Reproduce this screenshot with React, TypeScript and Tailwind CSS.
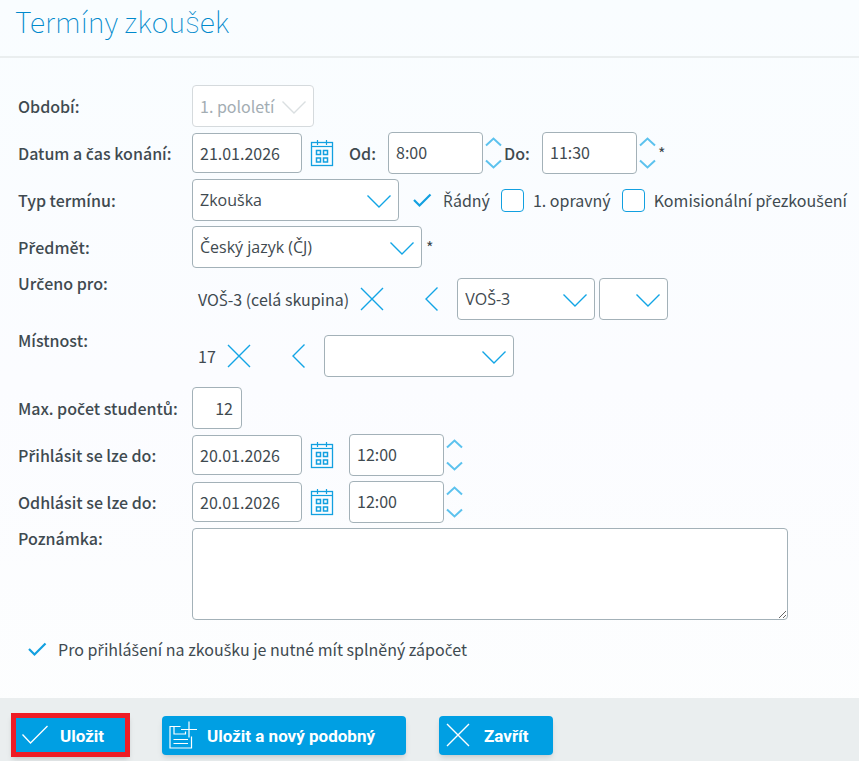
import { useState } from "react";
import type { ReactNode } from "react";

const BOX = "h-[42px] rounded border border-[#a3b1b8] bg-white text-base text-[#3f4a50]";

// Noto CJK has no precomposed č, ř, š, ů, so these come from another family
function Cz({ text, font = "font-['Open_Sans',sans-serif]" }: { text: string; font?: string }) {
    return (
        <span>
            {text.split(/([čřšůČŘŠŮ])/).map((part, i) =>
                i % 2 ? (
                    <span key={i} className={font}>{part}</span>
                ) : (
                    part
                )
            )}
        </span>
    );
}

function Row({ label, htmlFor, top, children }: { label: string; htmlFor?: string; top?: boolean; children: ReactNode }) {
    return (
        <div className={`flex ${top ? "items-start" : "items-center"}`}>
            <label htmlFor={htmlFor} className="w-[174px] shrink-0 font-medium leading-5 whitespace-nowrap">
                <Cz text={label} font="font-['Open_Sans',sans-serif] font-semibold" />
            </label>
            {children}
        </div>
    );
}

function Select({ id, label, width, options, disabled }: {
    id: string;
    label?: string;
    width: string;
    options: string[];
    disabled?: boolean;
}) {
    return (
        <div className={`relative shrink-0 ${width}`}>
            <select
                id={id}
                aria-label={label}
                disabled={disabled}
                className={`${BOX} block w-full appearance-none pl-[7px] font-['Open_Sans',sans-serif] disabled:border-[#d5dadd] disabled:font-['Noto_Sans_CJK_SC',sans-serif] disabled:text-[#a3adb3] disabled:opacity-100`}
            >
                {options.map((o) => (
                    <option key={o}>{o}</option>
                ))}
            </select>
            <svg
                viewBox="0 0 24 13"
                className={`pointer-events-none absolute top-4 right-2 h-[13px] w-6 ${disabled ? "text-[#dadfe1]" : "text-[#12a5e5]"}`}
                fill="none"
                stroke="currentColor"
                strokeWidth="1.4"
            >
                <path d="M0.5 0.5L12 12L23.5 0.5" />
            </svg>
        </div>
    );
}

function DateField({ id, value }: { id: string; value: string }) {
    return (
        <>
            <input id={id} type="text" defaultValue={value} className="h-10 w-[110px] rounded border border-[#a3b1b8] bg-white px-[7px] text-base" />
            <button type="button" aria-label="Kalendář" className="ml-2 mr-[15px] shrink-0 text-[#12a0e0]">
                <svg viewBox="0 0 24 27" className="h-[27px] w-6" fill="none" stroke="currentColor">
                    <rect x="1.5" y="2.5" width="21" height="23" strokeWidth="1.3" />
                    <path d="M1 6.5H23" strokeWidth="1.2" />
                    <path d="M7.5 0V5M16.5 0V5" strokeWidth="1.2" />
                    <g strokeWidth="1.5">
                        <rect x="6.5" y="10.5" width="4" height="4" />
                        <rect x="13.5" y="10.5" width="4" height="4" />
                        <rect x="6.5" y="18" width="4" height="4" />
                        <rect x="13.5" y="18" width="4" height="4" />
                    </g>
                </svg>
            </button>
        </>
    );
}

function TimeField({ id, label, value }: { id: string; label?: string; value: string }) {
    return (
        <>
            <input id={id} aria-label={label} type="text" defaultValue={value} className={`${BOX} w-[95px] px-[7px] pb-0.5`} />
            <div className="flex w-[21px] shrink-0 flex-col items-center gap-3 text-[#5cc2ee]">
                <button type="button" aria-label="Více" className="block">
                    <svg viewBox="0 0 17 10" className="h-2.5 w-[17px]" fill="none" stroke="currentColor" strokeWidth="2">
                        <path d="M1 8.5L8.5 1.5L16 8.5" />
                    </svg>
                </button>
                <button type="button" aria-label="Méně" className="block">
                    <svg viewBox="0 0 17 10" className="h-2.5 w-[17px]" fill="none" stroke="currentColor" strokeWidth="2">
                        <path d="M1 1.5L8.5 8.5L16 1.5" />
                    </svg>
                </button>
            </div>
        </>
    );
}

function Checkbox({ id, label, checked }: { id: string; label: string; checked?: boolean }) {
    const [on, setOn] = useState(!!checked);
    return (
        <div className="flex shrink-0 items-center">
            <span className="relative block size-[23px]">
                <input
                    id={id}
                    type="checkbox"
                    checked={on}
                    onChange={(e) => setOn(e.target.checked)}
                    className="block size-[23px] appearance-none rounded border border-[#12a0e0] bg-white checked:border-transparent checked:bg-transparent"
                />
                {on && (
                    <svg viewBox="0 0 23 23" className="pointer-events-none absolute inset-0 size-[23px]" fill="none" stroke="#12a0e0" strokeWidth="2.2">
                        <path d="M3 11L8.5 16.5L19.5 5.5" />
                    </svg>
                )}
            </span>
            <label htmlFor={id} className="pl-[9px] leading-6 whitespace-nowrap">
                <Cz text={label} />
            </label>
        </div>
    );
}

function Cross() {
    return (
        <svg viewBox="0 0 24 24" className="size-6" fill="none" stroke="currentColor" strokeWidth="1.4">
            <path d="M1 1L23 23M23 1L1 23" />
        </svg>
    );
}

// assigned item with its remove button and the arrow that adds from the list
function Assigned({ text }: { text: string }) {
    return (
        <div className="flex shrink-0 items-center pl-1.5 text-[#12a5e5]">
            <span className="leading-6 text-[#3f4a50] whitespace-nowrap">
                <Cz text={text} />
            </span>
            <button type="button" aria-label={`Odebrat ${text}`} className="ml-[11px] mr-[41px]">
                <Cross />
            </button>
            <button type="button" aria-label="Přidat" className="mr-[15px]">
                <svg viewBox="0 0 13 24" className="h-6 w-[13px]" fill="none" stroke="currentColor" strokeWidth="1.4">
                    <path d="M12.5 0.5L1 12L12.5 23.5" />
                </svg>
            </button>
        </div>
    );
}

const ACTION = "flex items-center bg-[#009fe3] font-['Roboto',sans-serif] text-[17px] font-bold text-white shadow-md";

export default function App() {
    return (
        <form
            lang="cs"
            onSubmit={(e) => e.preventDefault()}
            className="flex min-h-screen flex-col bg-linear-to-b from-[#f9fdff] via-[#fbfcff] to-[#fdfefe] font-['Noto_Sans_CJK_SC','Open_Sans',sans-serif] text-base text-[#3f4a50]"
        >
            <header className="border-b-2 border-[#eaeeef] px-[15px] pb-[13px]">
                <h1 className="text-[29px] leading-10 font-thin text-[#0089cc]">
                    <Cz text="Termíny zkoušek" font="font-['Roboto',sans-serif]" />
                </h1>
            </header>

            <div className="flex grow flex-col gap-[5px] px-[18px] pt-[27px] pb-9">
                <Row label="Období:" htmlFor="obdobi">
                    <Select id="obdobi" width="w-[122px]" options={["1. pololetí"]} disabled />
                </Row>
                <Row label="Datum a čas konání:" htmlFor="datum">
                    <DateField id="datum" value="21.01.2026" />
                    <label htmlFor="od" className="w-[39px] font-medium">Od:</label>
                    <TimeField id="od" value="8:00" />
                    <label htmlFor="do" className="w-[38px] font-medium">Do:</label>
                    <TimeField id="do" value="11:30" />
                    <span>*</span>
                </Row>
                <Row label="Typ termínu:" htmlFor="typ">
                    <Select id="typ" width="w-[207px]" options={["Zkouška"]} />
                    <div className="flex items-center gap-[11px] pl-3">
                        <Checkbox id="radny" label="Řádný" checked />
                        <Checkbox id="opravny" label="1. opravný" />
                        <Checkbox id="komis" label="Komisionální přezkoušení" />
                    </div>
                </Row>
                <Row label="Předmět:" htmlFor="predmet">
                    <Select id="predmet" width="w-[230px]" options={["Český jazyk (ČJ)"]} />
                    <span className="pl-1">*</span>
                </Row>
                <Row label="Určeno pro:" htmlFor="skupina" top>
                    <div className="flex items-center gap-1 py-[5px]">
                        <Assigned text="VOŠ-3 (celá skupina)" />
                        <Select id="skupina" width="w-[138px]" options={["VOŠ-3"]} />
                        <Select id="podskupina" label="Podskupina" width="w-[69px]" options={[""]} />
                    </div>
                </Row>
                <Row label="Místnost:" htmlFor="mistnost" top>
                    <div className="flex items-center gap-1 py-[5px]">
                        <Assigned text="17" />
                        <Select id="mistnost" width="w-[190px]" options={[""]} />
                    </div>
                </Row>
                <Row label="Max. počet studentů:" htmlFor="max">
                    <input id="max" type="text" defaultValue="12" className={`${BOX} w-[50px] px-2 text-right`} />
                </Row>
                <Row label="Přihlásit se lze do:" htmlFor="prihlasit">
                    <DateField id="prihlasit" value="20.01.2026" />
                    <TimeField id="prihlasit-cas" label="Přihlásit se lze do, čas" value="12:00" />
                </Row>
                <Row label="Odhlásit se lze do:" htmlFor="odhlasit">
                    <DateField id="odhlasit" value="20.01.2026" />
                    <TimeField id="odhlasit-cas" label="Odhlásit se lze do, čas" value="12:00" />
                </Row>
                <Row label="Poznámka:" htmlFor="poznamka" top>
                    <textarea id="poznamka" className="h-[92px] w-full max-w-[596px] rounded border border-[#a3b1b8] bg-white p-2" />
                </Row>
                <div className="pt-3 pl-2">
                    <Checkbox id="zapocet" label="Pro přihlášení na zkoušku je nutné mít splněný zápočet" checked />
                </div>
            </div>

            <footer className="flex items-center bg-[#eaeeef] px-[11px] pt-[15px] pb-1">
                <button type="submit" className={`${ACTION} h-11 w-[119px] border-[5px] border-[#ee1c25] pl-1.5`}>
                    <svg viewBox="0 0 26 20" className="h-5 w-[26px]" fill="none" stroke="currentColor" strokeWidth="1.3">
                        <path d="M0.5 9.5L8.5 18L25.5 1" />
                    </svg>
                    <span className="pt-1 pl-3">Uložit</span>
                </button>
                <button type="button" className={`${ACTION} ml-8 h-[39px] w-[244px] rounded pl-[7px]`}>
                    <svg viewBox="0 0 28 28" className="size-7" fill="none" stroke="currentColor" strokeWidth="1.2">
                        <path d="M11.5 5.5H1V27H22.5V15.5" />
                        <path d="M5 5.5V13H16.5V10.5" />
                        <path d="M12 8.5H28M20 0.5V16.5" />
                        <path d="M4.5 18.5H19M4.5 22.5H19" />
                    </svg>
                    <span className="pt-1 pl-2.5">Uložit a nový podobný</span>
                </button>
                <button type="button" className={`${ACTION} ml-[33px] h-[39px] w-[114px] rounded pl-[7px]`}>
                    <Cross />
                    <span className="pt-1 pl-3.5">Zavřít</span>
                </button>
            </footer>
        </form>
    );
}
